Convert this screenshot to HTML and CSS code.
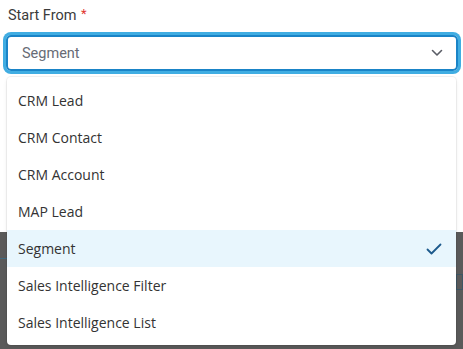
FILE: index.html
```html
<!DOCTYPE html>
<html>
<head>
  <link rel="stylesheet" href="styles.css">
</head>
<body>
  <div class="page">
    <div class="top">
      <label class="label">Start From <span class="req">*</span></label>
      <div class="select">
        <span class="value">Segment</span>
        <svg class="chevron" width="12" height="8" viewBox="0 0 12 8">
          <path d="M1.5 1.5 L6 6 L10.5 1.5" fill="none" stroke="#5a5d66" stroke-width="1.6" stroke-linecap="round" stroke-linejoin="round"/>
        </svg>
      </div>
    </div>
    <div class="backdrop">
      <div class="ghost-line"></div>
      <div class="ghost-box"></div>
    </div>

    <ul class="menu">
      <li class="item">CRM Lead</li>
      <li class="item">CRM Contact</li>
      <li class="item">CRM Account</li>
      <li class="item">MAP Lead</li>
      <li class="item selected">Segment
        <svg class="check" width="16" height="12" viewBox="0 0 16 12">
          <path d="M1.5 6.5 L5.5 10.5 L14.5 1.5" fill="none" stroke="#1d5a8c" stroke-width="1.8" stroke-linecap="round" stroke-linejoin="round"/>
        </svg>
      </li>
      <li class="item">Sales Intelligence Filter</li>
      <li class="item">Sales Intelligence List</li>
    </ul>
  </div>
</body>
</html>
```

FILE: styles.css
```css
html, body { margin: 0; padding: 0; }
body { font-family: "Open Sans", Arial, sans-serif; color: #333; }

.page {
  position: relative;
  width: 463px;
  height: 349px;
  display: flex;
  flex-direction: column;
  overflow: hidden;
}

.top {
  height: 232px;
  background: #fff;
  padding: 4px 5px 0 6px;
  box-sizing: border-box;
}

.label {
  display: block;
  font-family: Roboto, Arial, sans-serif;
  font-size: 14.5px;
  color: #3b3b3b;
  margin-left: 2px;
  line-height: 20px;
}
.req { color: #e0372f; font-size: 13px; vertical-align: 2px; margin-left: 1px; }

.select {
  margin-top: 9px;
  height: 36px;
  border: 2px solid #1a84c7;
  border-radius: 5px;
  box-shadow: 0 0 0 3px #40ade2;
  display: flex;
  align-items: center;
  justify-content: space-between;
  padding: 0 13px 0 14px;
  box-sizing: border-box;
}
.value {
  font-family: Roboto, Arial, sans-serif;
  font-size: 14.5px;
  color: #676b75;
}

.backdrop {
  flex: 1;
  background: #5a5a5a;
  position: relative;
}
.ghost-line {
  position: absolute;
  left: 0; top: 26px;
  width: 10px; height: 1px;
  background: #3f6a80;
}
.ghost-box {
  position: absolute;
  right: 0; top: 42px;
  width: 5px; height: 14px;
  border: 1px solid #3d5664;
}

.menu {
  position: absolute;
  left: 7px;
  top: 77px;
  width: 449px;
  margin: 0;
  padding: 5px 0 4px;
  list-style: none;
  background: #fff;
  border-radius: 4px;
  box-shadow: 0 0 0 1px rgba(0,0,0,0.05), 0 2px 4px rgba(0,0,0,0.08);
  box-sizing: border-box;
}
.item {
  height: 37px;
  display: flex;
  align-items: center;
  justify-content: space-between;
  padding: 0 14px 0 11px;
  font-size: 14px;
  color: #333;
}
.selected { background: #e8f6fd; }
.check { margin-top: 1px; }
```
